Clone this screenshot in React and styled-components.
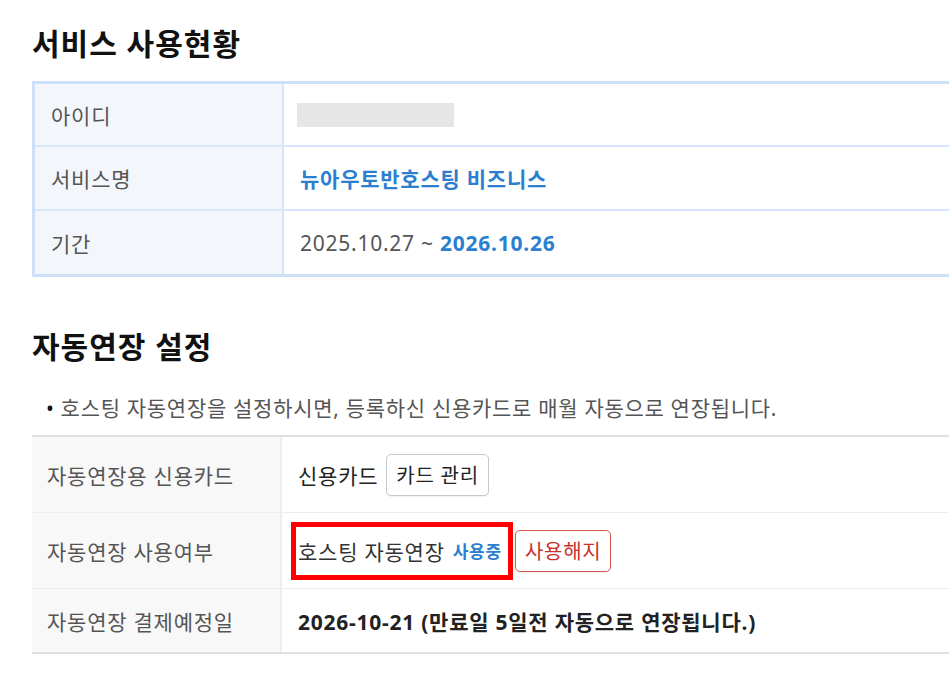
import styled, { createGlobalStyle } from "styled-components"

const GlobalStyle = createGlobalStyle`
    body{
        margin: 0;
        background: #fff;
        font-family: "Noto Sans", "Noto Sans CJK KR", sans-serif;
        color: #555;
    }
`

const Page = styled.div`
    padding: 22px 0 0 32px;
    overflow: hidden;
    width: 949px;
    box-sizing: border-box;
`

const Title = styled.h2`
    margin: 0 0 ${({ gap }) => gap}px 0;
    font-size: 30px;
    font-weight: 700;
    color: #111;
    line-height: 44px;
    letter-spacing: 1px;
`

const InfoTable = styled.div`
    display: grid;
    grid-template-columns: 249px 1fr;
    width: 1000px;
    border: 3px solid #cde0f8;
    border-right: 0;
    margin-bottom: 48px;
`

const SettingTable = styled.div`
    display: grid;
    grid-template-columns: 250px 1fr;
    width: 1000px;
    border-top: 2px solid #e0e0e0;
    border-bottom: 2px solid #e0e0e0;
`

const Label = styled.div`
    background: ${({ gray }) => gray ? "#f8f8f8" : "#f3f7fb"};
    border-right: 2px solid ${({ gray }) => gray ? "#eeeeee" : "#d6e6fa"};
    border-bottom: ${({ last, gray }) => last ? "0" : gray ? "1px solid #eeeeee" : "2px solid #d6e6fa"};
    padding: 0 0 0 ${({ gray }) => gray ? 15 : 16}px;
    height: ${({ h }) => h}px;
    display: flex;
    align-items: center;
    font-size: 21px;
    letter-spacing: 0.75px;
    color: #555;
`

const Value = styled.div`
    border-bottom: ${({ last, gray }) => last ? "0" : gray ? "1px solid #eeeeee" : "2px solid #d6e6fa"};
    padding: 0 0 0 ${({ pl }) => pl}px;
    height: ${({ h }) => h}px;
    display: flex;
    align-items: center;
    gap: 8px;
    font-size: 21px;
    letter-spacing: 0.75px;
    color: ${({ strong }) => strong ? "#222" : "#555"};
    font-weight: ${({ strong }) => strong ? 700 : 400};
`

const Masked = styled.span`
    display: inline-block;
    width: 157px;
    height: 24px;
    background: #e6e6e6;
    margin-left: -3px;
`

const Blue = styled.span`
    color: #2c7fcf;
    font-weight: 700;
    font-size: ${({ small }) => small ? 17 : 21}px;
`

const Note = styled.p`
    margin: 0 0 13px 14px;
    font-size: 21px;
    letter-spacing: 0.7px;
    line-height: 28px;
    color: #555;
    &::before{
        content: "•";
        color: #111;
        margin-right: 6px;
    }
`

const Button = styled.button`
    font-family: inherit;
    font-size: 20px;
    letter-spacing: 0.75px;
    height: 42px;
    padding: 0 9px;
    background: #fff;
    border: 1px solid ${({ danger }) => danger ? "#d9534f" : "#c8c8c8"};
    border-radius: 5px;
    color: ${({ danger }) => danger ? "#c9302c" : "#222"};
    box-shadow: 0 1px 1px rgba(0,0,0,0.06);
    cursor: pointer;
`

const Highlight = styled.span`
    display: inline-flex;
    align-items: center;
    gap: 8px;
    border: 5px solid #ff0000;
    height: 48px;
    padding: 0 6px 0 2px;
    margin-left: -7px;
    color: #333;
`

export default function App() {
    return (
        <Page>
            <GlobalStyle />
            <Title gap={15}>서비스 사용현황</Title>
            <InfoTable>
                <Label h={61}>아이디</Label>
                <Value h={61} pl={16}><Masked /></Value>
                <Label h={62}>서비스명</Label>
                <Value h={62} pl={16}><Blue>뉴아우토반호스팅 비즈니스</Blue></Value>
                <Label h={63} last>기간</Label>
                <Value h={63} pl={16} last>2025.10.27 ~&nbsp;<Blue style={{ marginLeft: -8 }}>2026.10.26</Blue></Value>
            </InfoTable>

            <Title gap={25}>자동연장 설정</Title>
            <Note>호스팅 자동연장을 설정하시면, 등록하신 신용카드로 매월 자동으로 연장됩니다.</Note>
            <SettingTable>
                <Label gray h={75}>자동연장용 신용카드</Label>
                <Value gray h={75} pl={16} style={{ color: "#222" }}>
                    신용카드 <Button>카드 관리</Button>
                </Value>
                <Label gray h={75}>자동연장 사용여부</Label>
                <Value gray h={75} pl={16} style={{ gap: 2 }}>
                    <Highlight>호스팅 자동연장 <Blue small>사용중</Blue></Highlight>
                    <Button danger>사용해지</Button>
                </Value>
                <Label gray h={63} last>자동연장 결제예정일</Label>
                <Value gray h={63} pl={16} last strong>2026-10-21 (만료일 5일전 자동으로 연장됩니다.)</Value>
            </SettingTable>
        </Page>
    )
}
